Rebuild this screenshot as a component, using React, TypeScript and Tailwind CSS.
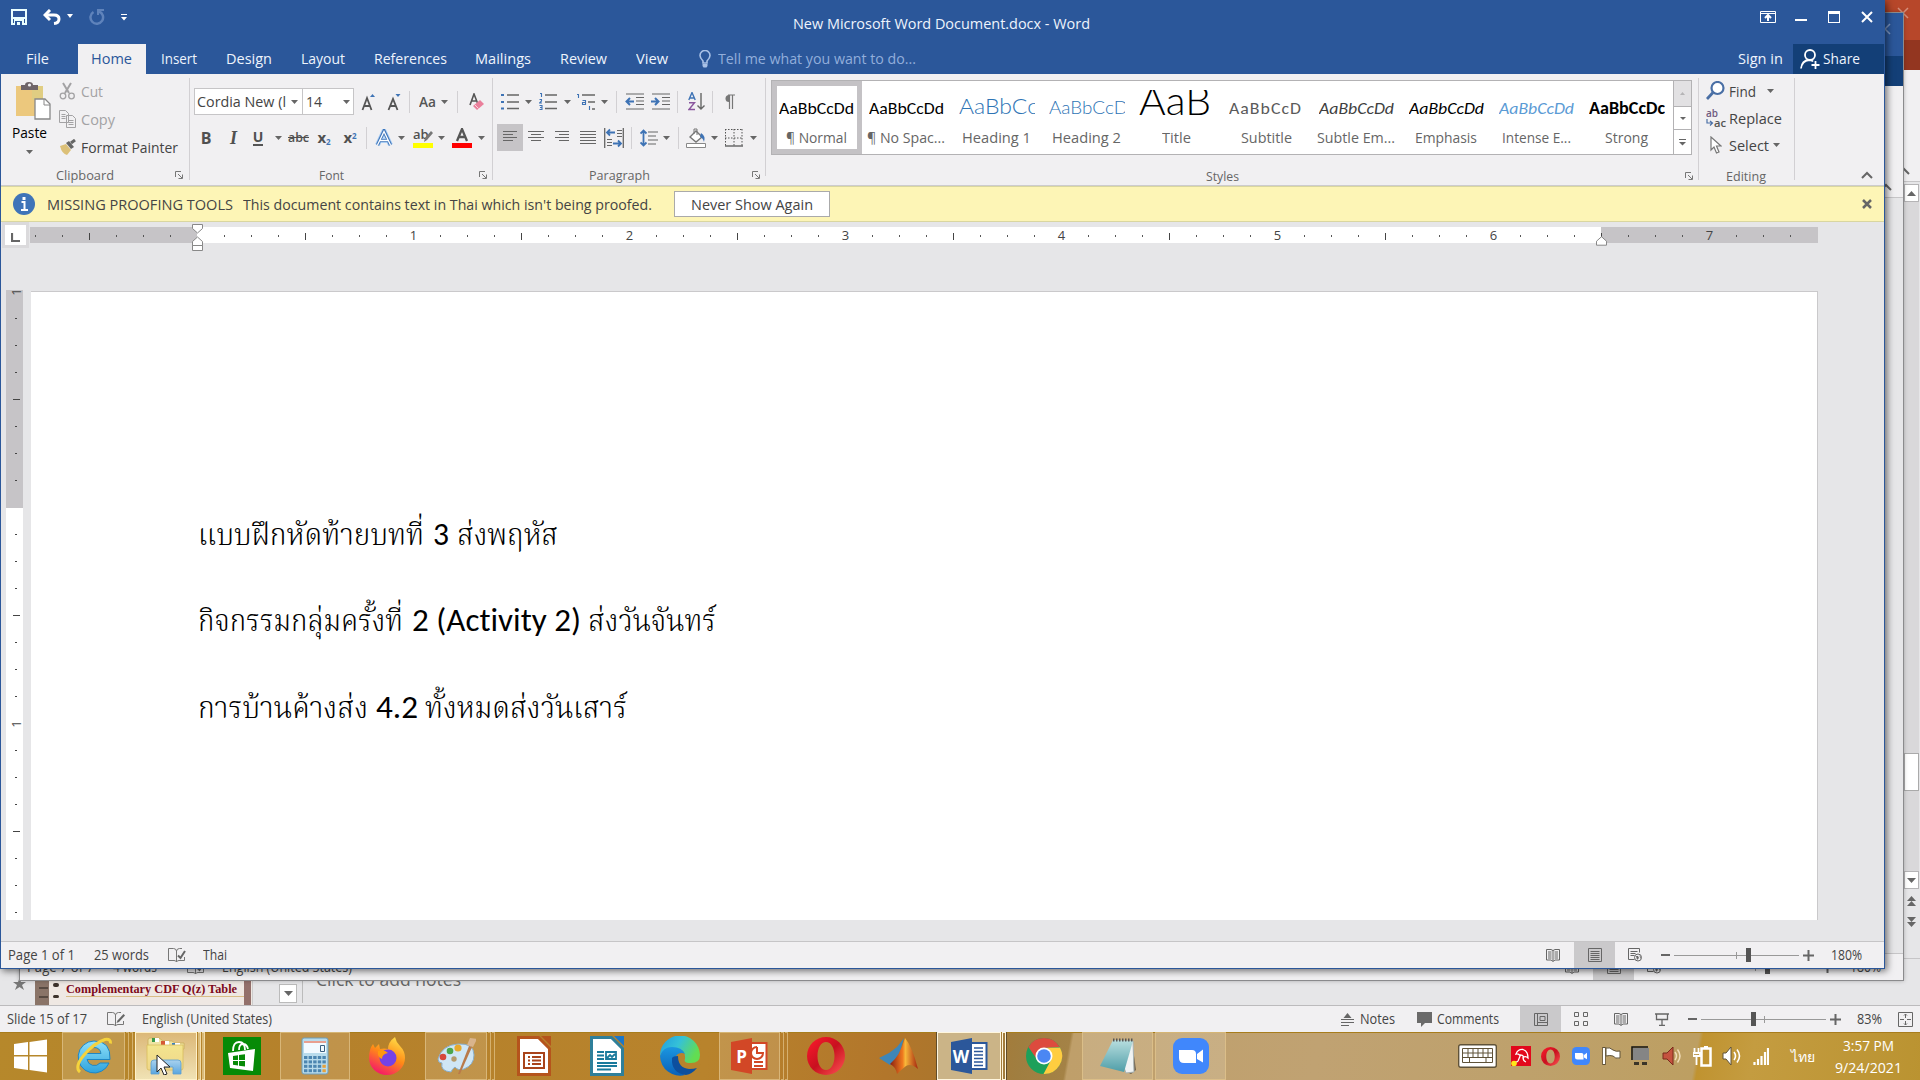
import React, { useLayoutEffect, useRef, useState } from "react";

type P = { className?: string; children?: React.ReactNode };

/* Text condensed or widened to the width of its box. */
function Fit({ className = "", children }: P) {
  const outer = useRef<HTMLSpanElement>(null);
  const inner = useRef<HTMLSpanElement>(null);
  const [scale, setScale] = useState(1);
  useLayoutEffect(() => {
    if (outer.current && inner.current && inner.current.offsetWidth > 0) {
      setScale(outer.current.offsetWidth / inner.current.getBoundingClientRect().width);
    }
  }, []);
  return (
    <span ref={outer} className={`block shrink-0 whitespace-nowrap ${className}`}>
      <span ref={inner} className="inline-block origin-left" style={{ transform: `scaleX(${scale})` }}>
        {children}
      </span>
    </span>
  );
}

function Svg({ w, h, className = "", children }: P & { w: number; h: number }) {
  return (
    <svg width={w} height={h} viewBox={`0 0 ${w} ${h}`} fill="none" className={`block shrink-0 ${className}`}>
      {children}
    </svg>
  );
}

const Caret = ({ className = "" }: P) => (
  <Svg w={7} h={4} className={className}>
    <path d="M0 0h7L3.500 4z" fill="#666" />
  </Svg>
);
const Cell = ({ className = "", children }: P) => (
  <div className={`flex shrink-0 items-center justify-center ${className}`}>{children}</div>
);
const VLine = ({ className = "" }: P) => <div className={`w-px shrink-0 bg-[#d2d0d3] ${className}`} />;
const Launcher = ({ className = "" }: P) => (
  <Svg w={8} h={8} className={className}>
    <path d="M.5 6V.5H6M3 3l4 4M7.500 3.500v4h-4" stroke="#777" />
  </Svg>
);
const Cross = ({ c = "#fff", s = 12, sw = 2 }: { c?: string; s?: number; sw?: number }) => (
  <Svg w={s} h={s}>
    <path d={`M1 1L${s - 1} ${s - 1}M${s - 1} 1L1 ${s - 1}`} stroke={c} strokeWidth={sw} />
  </Svg>
);
const ChevronUp = () => (
  <Svg w={12} h={8}>
    <path d="M1 7l5-5 5 5" stroke="#666" strokeWidth="2" />
  </Svg>
);

/* ---------- shared status-bar pieces ---------- */

const ProofIcon = ({ edit }: { edit?: boolean }) => (
  <Svg w={18} h={15}>
    <path d="M8.500 14V3Q8 .500 5.500.500H.500v12H6q2 0 2.500 1.500Q9 12.500 11 12.500h5.500V9" stroke="#777" />
    <path d="M8.500 3Q9 .500 11.500.500H14" stroke="#777" />
    {edit ? <path d="M9.500 11l1-2.500 6-6.500 1.500 1.500-6 6.500z" fill="#666" /> : <path d="M10 7.500l2.500 2.500 4.500-7" stroke="#666" strokeWidth="2" />}
  </Svg>
);
const BookIcon = () => (
  <Svg w={14} h={14}>
    <path d="M.5 1.500h4.500l2 1 2-1h4.500V12H9l-2 1.500L5 12H.500zM7 2v11" stroke="#666" />
    <path d="M2 4h3.500M2 6h3.500M2 8h3.500M2 10h3.500M8.500 4H12M8.500 6H12M8.500 8H12M8.500 10H12" stroke="#666" />
  </Svg>
);
const PrintLayoutIcon = () => (
  <Svg w={14} h={14}>
    <path d="M.5.500h13v13H.500z" stroke="#666" />
    <path d="M2.500 3.500h9M2.500 5.500h9M2.500 7.500h9M2.500 9.500h9M2.500 11.500h9" stroke="#666" />
  </Svg>
);
const WebIcon = () => (
  <Svg w={15} h={14}>
    <path d="M6.500 11.500H.500V.500h11v4M2.500 3.500h7M2.500 5.500h5M2.500 7.500h4" stroke="#666" />
    <circle cx="10" cy="9.500" r="3.500" stroke="#666" />
    <path d="M8 8l2 0 1 2-2 2zM11 7l2 2v2z" fill="#666" />
  </Svg>
);
const Minus = () => <div className="h-[2px] w-[9px] shrink-0 bg-[#666]" />;
const Plus = () => (
  <Svg w={11} h={11}>
    <path d="M5.500 0v11M0 5.500h11" stroke="#666" strokeWidth="2" />
  </Svg>
);

function WordStatus({ page, words, wordsWidth, lang }: { page: string; words: string; wordsWidth: string; lang: React.ReactNode }) {
  return (
    <div className="flex h-[27px] shrink-0 items-center border-t border-[#c6c5c7] bg-[#f1f0f2] text-[14px] leading-[18px] text-[#444] [&_span]:-mt-px">
      <Fit className="ml-[7px] w-[67px]">{page}</Fit>
      <div className="ml-[19px] w-[55px]"><Fit className={wordsWidth}>{words}</Fit></div>
      <div className="ml-[19px]"><ProofIcon /></div>
      <div className="ml-[17px]">{lang}</div>
      <div className="ml-auto"><BookIcon /></div>
      <Cell className="ml-[14px] h-full w-[41px] bg-[#cac9cb]"><PrintLayoutIcon /></Cell>
      <div className="ml-[13px]"><WebIcon /></div>
      <div className="ml-[18px]"><Minus /></div>
      <div className="ml-[4px] flex h-4 w-[125px] items-center">
        <div className="h-px w-[62px] bg-[#999]" />
        <div className="h-[7px] w-px bg-[#999]" />
        <div className="h-px w-[9px] bg-[#999]" />
        <div className="h-[14px] w-[5px] bg-[#555]" />
        <div className="h-px w-[48px] bg-[#999]" />
      </div>
      <div className="ml-[4px]"><Plus /></div>
      <Fit className="ml-[17px] mr-[22px] w-[31px]">180%</Fit>
    </div>
  );
}

/* ---------- PowerPoint window ---------- */

const UpTri = () => (
  <Svg w={9} h={5}><path d="M0 5L4.500 0 9 5z" fill="#666" /></Svg>
);
const DownTri = () => (
  <Svg w={9} h={5}><path d="M0 0h9L4.500 5z" fill="#666" /></Svg>
);

function PowerPoint() {
  return (
    <div className="absolute inset-0 flex flex-col bg-[#e6e6e8]">
      <div className="flex h-[40px] shrink-0 justify-end bg-[#b7472a] pr-[11px] pt-[7px]">
        <Cross c="#d68f7c" sw={1.5} />
      </div>
      <div className="h-[30px] shrink-0 bg-[#933620]" />
      <div className="flex h-[112px] shrink-0 items-end justify-end border-b border-[#c6c5c7] bg-[#f1f0f2] pb-[6px] pr-[10px]">
        <ChevronUp />
      </div>
      <div className="flex h-[776px] shrink-0 justify-end">
        <div className="flex w-[17px] flex-col items-center">
          <Cell className="mt-[2px] h-[18px] w-[15px] border border-[#b5b4b6] bg-white"><UpTri /></Cell>
          <div className="h-[551px] w-[15px] shrink-0 bg-[#d9d8da]" />
          <div className="h-[38px] w-[15px] shrink-0 border border-[#aaa] bg-white" />
          <div className="h-[80px] w-[15px] shrink-0 bg-[#d9d8da]" />
          <Cell className="h-[18px] w-[15px] border border-[#b5b4b6] bg-white"><DownTri /></Cell>
          <div className="mt-[7px]"><UpTri /><UpTri /></div>
          <div className="mt-[11px]"><DownTri /><DownTri /></div>
        </div>
      </div>
      <div className="flex h-[47px] shrink-0 items-end border-t border-[#c6c5c7]">
        <div className="ml-[13px] flex h-[27px] w-[22px] items-start">
          <Svg w={13} h={12}><path d="M6.500 0l1.500 4 5 0-4 3 2 5-4.500-3L2 12l2-5-4-3h5z" fill="#777" /></Svg>
        </div>
        <div className="flex h-[27px] w-[218px] border-r border-[#ccc] bg-[#efe8e3]">
          <div className="w-[14px] shrink-0 bg-[#8a7468]">
            <div className="ml-1 mt-[9px] h-[2px] w-[9px] bg-[#584a42]" />
            <div className="ml-1 mt-[7px] h-[2px] w-[9px] bg-[#584a42]" />
          </div>
          <div className="ml-[4px] flex w-[6px] shrink-0 flex-col gap-[8px] pt-[5px]">
            <div className="h-[4px] rounded-full bg-[#3c322c]" />
            <div className="h-[3px] rounded-full bg-[#3c322c]" />
          </div>
          <div className="ml-[2px] w-[180px] shrink-0 pl-[5px] font-['Liberation_Serif',serif]">
            <div className="h-[19px] w-[178px] border-b border-[#d9bd86] pt-[3px] text-[13.500px] font-bold leading-[16px] text-[#7d0a1c]">
              <Fit className="w-[171px]">Complementary CDF Q(z) Table</Fit>
            </div>
          </div>
          <div className="ml-[3px] w-[7px] shrink-0 bg-[#93706b]" />
        </div>
        <div className="mb-[2px] ml-[26px] flex h-[19px] w-[18px] items-center justify-center border border-[#bbb] bg-white"><DownTri /></div>
        <div className="mb-[2px] ml-[5px] h-[22px] w-px bg-[#bbb]" />
        <div className="ml-[13px] h-[36px] text-[18px] leading-[20px] text-[#666]"><Fit className="w-[145px]">Click to add notes</Fit></div>
      </div>
      <div className="flex h-[27px] shrink-0 items-center border-t border-[#bcbbbd] bg-[#f1f0f2] text-[14px] leading-[18px] text-[#444] [&_span]:-mt-px">
        <Fit className="ml-[7px] w-[80px]">Slide 15 of 17</Fit>
        <div className="ml-[20px]"><ProofIcon edit /></div>
        <Fit className="ml-[17px] w-[130px]">English (United States)</Fit>
        <div className="ml-auto">
          <Svg w={13} h={13}><path d="M6.500 0l4 5h-8z" fill="#666" /><path d="M0 6.500h13M0 9.500h13M0 12.500h8" stroke="#666" /></Svg>
        </div>
        <Fit className="ml-[6px] w-[35px]">Notes</Fit>
        <div className="ml-[22px]">
          <Svg w={15} h={15}><path d="M0 0h15v11H8l-4 4v-4H0z" fill="#6a6a6a" /></Svg>
        </div>
        <Fit className="ml-[5px] w-[62px]">Comments</Fit>
        <Cell className="ml-[21px] h-full w-[41px] bg-[#cac9cb]">
          <Svg w={14} h={13}><path d="M.5.500h13v12H.500zM3.500.500v12M6 3.500h5v4H6zM3.500 9.500h10" stroke="#666" /></Svg>
        </Cell>
        <div className="ml-[13px]">
          <Svg w={14} h={14}><path d="M.5.500h4v4h-4zM9.500.500h4v4h-4zM.5 9.500h4v4h-4zM9.500 9.500h4v4h-4z" stroke="#666" /></Svg>
        </div>
        <div className="ml-[26px]"><BookIcon /></div>
        <div className="ml-[27px]">
          <Svg w={14} h={13}><path d="M0 1h14M1.500 1v5.500h11V1M7 7v5M4 12.500h6" stroke="#666" strokeWidth="1.300" /></Svg>
        </div>
        <div className="ml-[19px]"><Minus /></div>
        <div className="ml-[4px] flex h-4 w-[125px] items-center">
          <div className="h-px w-[50px] bg-[#999]" />
          <div className="h-[14px] w-[5px] bg-[#555]" />
          <div className="h-px w-[8px] bg-[#999]" />
          <div className="h-[7px] w-px bg-[#999]" />
          <div className="h-px w-[61px] bg-[#999]" />
        </div>
        <div className="ml-[4px]"><Plus /></div>
        <Fit className="ml-[16px] w-[25px]">83%</Fit>
        <div className="ml-[16px] mr-[7px]">
          <Svg w={15} h={15}><path d="M.5.500h14v14H.500zM7.500 2v4M7.500 9v4M2 7.500h4M9 7.500h4M6 3.500L7.500 2 9 3.500M6 11.500L7.500 13 9 11.500" stroke="#666" /></Svg>
        </div>
      </div>
    </div>
  );
}

/* ---------- Word window underneath ---------- */

function BackWord() {
  return (
    <div className="absolute left-[19px] top-[12px] flex h-[969px] w-[1885px] flex-col border border-[#8b8b8d] bg-[#e6e6e8] shadow-[0_0_4px_rgba(0,0,0,0.25)]">
      <div className="flex h-[43px] shrink-0 justify-end bg-[#2b579a] pr-[12px] pt-[10px]"><Cross c="#7d97c3" sw={1.5} /></div>
      <div className="flex h-[30px] shrink-0 justify-end bg-[#2b579a]"><div className="w-[91px] bg-[#133f77]" /></div>
      <div className="flex h-[112px] shrink-0 items-end justify-end border-b border-[#c6c5c7] bg-[#f1f0f2] pb-[6px] pr-[11px]"><ChevronUp /></div>
      <div className="grow" />
      <WordStatus page="Page 7 of 7" words="4 words" wordsWidth="w-[44px]" lang={<Fit className="w-[130px]">English (United States)</Fit>} />
    </div>
  );
}

/* ---------- main Word window ---------- */

function TitleArea() {
  return (
    <div className="h-[74px] shrink-0 bg-[#2b579a] text-[15px] text-[#eef4fd]">
      <div className="flex h-[44px] items-start">
        <div className="ml-[10px] mt-[9px]">
          <Svg w={16} h={16}><path d="M1 1h14v14H1zM1 9h14" stroke="#eaffff" strokeWidth="2" /><path d="M3 10h10v5H3z" fill="#eaffff" /><path d="M4 12h7v4H4z" fill="#2b579a" /><path d="M6 13h3v3H6z" fill="#eaffff" /></Svg>
        </div>
        <div className="ml-[16px] mt-[9px]">
          <Svg w={18} h={16}><path d="M2 6h9q5 0 5 4t-5 4.500" stroke="#fff" strokeWidth="3" /><path d="M7 1L2 6l5 5" stroke="#fff" strokeWidth="3" /></Svg>
        </div>
        <div className="ml-[6px] mt-[14px]"><Svg w={6} h={4}><path d="M0 0h6L3 4z" fill="#fff" /></Svg></div>
        <div className="ml-[15px] mt-[8px]">
          <Svg w={17} h={17}><path d="M11 3.500a6.300 6.300 0 1 1-5.500.5" stroke="#5f83bb" strokeWidth="2.500" /><path d="M9 2h7M10 1v6" stroke="#5f83bb" strokeWidth="2" /></Svg>
        </div>
        <div className="ml-[16px] mt-[14px]"><Svg w={6} h={7}><path d="M0 .5h6" stroke="#fff" /><path d="M0 3h6L3 6.500z" fill="#fff" /></Svg></div>
        <Fit className="ml-[666px] mt-[12px] w-[297px] leading-[22px]">New Microsoft Word Document.docx - Word</Fit>
        <div className="ml-auto mt-[11px]"><Svg w={16} h={12}><path d="M.5.500h15v11H.500zM.5 2.500h15" stroke="#fff" /><path d="M8 10V4M5 7l3-3 3 3" stroke="#fff" strokeWidth="2" /></Svg></div>
        <div className="ml-[19px] mt-[19px] h-[2px] w-[12px] bg-white" />
        <div className="ml-[21px] mt-[11px] h-[12px] w-[12px] border border-t-[3px] border-white" />
        <div className="ml-[21px] mr-[11px] mt-[11px]"><Cross /></div>
      </div>
      <div className="flex h-[30px] items-center [&_span]:-mt-px">
        <Fit className="ml-[25px] w-[23px]">File</Fit>
        <div className="ml-[29px] flex h-full w-[68px] items-center bg-[#f1f0f2] pl-[13px] text-[#2b579a]"><Fit className="w-[41px]">Home</Fit></div>
        <Fit className="ml-[15px] w-[36px]">Insert</Fit>
        <Fit className="ml-[29px] w-[46px]">Design</Fit>
        <Fit className="ml-[29px] w-[44px]">Layout</Fit>
        <Fit className="ml-[29px] w-[73px]">References</Fit>
        <Fit className="ml-[28px] w-[56px]">Mailings</Fit>
        <Fit className="ml-[29px] w-[47px]">Review</Fit>
        <Fit className="ml-[29px] w-[32px]">View</Fit>
        <div className="ml-[31px]">
          <Svg w={12} h={18}><path d="M4 13V11Q1 8 1 5.500A5 5 0 0 1 11 5.500Q11 8 8 11v2z" stroke="#a9c1e6" strokeWidth="1.600" /><path d="M3.500 14h5v2l-1 1.500h-3l-1-1.500z" fill="#a9c1e6" /></Svg>
        </div>
        <Fit className="ml-[7px] w-[198px] text-[#92aedb]">Tell me what you want to do...</Fit>
        <Fit className="ml-auto mr-[10px] w-[45px]">Sign in</Fit>
        <div className="flex h-full w-[91px] items-center bg-[#133f77] pl-[7px]">
          <Svg w={20} h={20}><circle cx="10" cy="6" r="5" stroke="#fff" strokeWidth="1.800" /><path d="M1 19.500q1-8 8-8.500 3 0 4 1.500M15.500 12v8M11.500 16h8" stroke="#fff" strokeWidth="1.800" /></Svg>
          <Fit className="ml-[3px] w-[37px]">Share</Fit>
        </div>
      </div>
    </div>
  );
}

const GroupLabel = ({ className = "", children }: P) => (
  <div className={`flex h-[20px] items-center pt-[1px] text-[13.500px] leading-[18px] text-[#666] ${className}`}>{children}</div>
);

function ClipboardGroup() {
  return (
    <div className="flex w-[188px] shrink-0 flex-col pt-[3px]">
      <div className="flex h-[87px]">
        <div className="flex w-[50px] flex-col pl-[11px]">
          <Svg w={36} h={40} className="ml-[3px] mt-[4px]">
            <path d="M1 5h27v30H1z" fill="#ecc87d" /><path d="M17 5h11v14H17z" fill="#dccf84" opacity=".7" />
            <path d="M6 9V4h4q0-3 4-3t4 3h5v5z" fill="#6e6468" /><circle cx="14.500" cy="4" r="1.600" fill="#f1f0f2" />
            <path d="M20 18h10l5 5v15H20z" fill="#fff" stroke="#888" strokeWidth="1.300" /><path d="M29 18v6h6" stroke="#888" />
          </Svg>
          <Fit className="w-[35px] text-[15px] leading-[22px]">Paste</Fit>
          <Caret className="ml-[14px] mt-[7px]" />
        </div>
        <div className="flex flex-col pl-[7px] text-[15px] leading-[28px]">
          <div className="flex h-[28px] items-center text-[#a3a2a4]">
            <Svg w={17} h={18} className="ml-px"><path d="M4 1l6 10M12 1L6 11" stroke="#a3a2a4" strokeWidth="2" /><circle cx="4" cy="14" r="2.800" stroke="#a3a2a4" strokeWidth="1.300" /><circle cx="12.500" cy="14" r="2.800" stroke="#a3a2a4" strokeWidth="1.300" /></Svg>
            <Fit className="ml-[5px] w-[22px]">Cut</Fit>
          </div>
          <div className="flex h-[28px] items-center text-[#a3a2a4]">
            <Svg w={18} h={18} className="ml-px"><path d="M.5.500h6l3 3v9h-9zM7.500 5.500h6l3 3v9h-9z" stroke="#a3a2a4" fill="#f1f0f2" /><path d="M2.500 4.500h4M2.500 6.500h4M2.500 8.500h4M9.500 10.500h5M9.500 12.500h5M9.500 14.500h5" stroke="#a3a2a4" /></Svg>
            <Fit className="ml-[4px] w-[34px]">Copy</Fit>
          </div>
          <div className="flex h-[28px] items-center text-[#444]">
            <Svg w={17} h={16} className="ml-px"><path d="M1 7l6-2 5 6-4 5q-5-1-7-9z" fill="#dcc078" /><path d="M7 4l3-2 5 6-3 2z" fill="#666" /><path d="M12 4l4-3" stroke="#666" strokeWidth="3" /></Svg>
            <Fit className="ml-[5px] w-[97px]">Format Painter</Fit>
          </div>
        </div>
      </div>
      <GroupLabel><Fit className="ml-[55px] w-[58px]">Clipboard</Fit><Launcher className="ml-[61px]" /></GroupLabel>
    </div>
  );
}

const Glyph = ({ className = "", children }: P) => <span className={`font-bold leading-none text-[#505050] ${className}`}>{children}</span>;

function FontGroup() {
  return (
    <div className="flex w-[302px] shrink-0 flex-col">
      <div className="mt-[14px] flex h-[27px] items-center text-[15px] text-[#444]">
        <div className="ml-[4px] flex h-[27px] w-[109px] items-center overflow-hidden border border-[#c6c5c7] bg-white pl-[2px]">
          <Fit className="w-[89px]">Cordia New (l</Fit><Caret className="ml-[5px]" />
        </div>
        <div className="-ml-px flex h-[27px] w-[52px] items-center border border-[#c6c5c7] bg-white pl-[3px]">
          <Fit className="w-[16px]">14</Fit><Caret className="ml-[21px]" />
        </div>
        <Cell className="w-[28px]">
          <Svg w={14} h={18}><path d="M1.500 17L6 5l4.500 12M3 13h6" stroke="#555" strokeWidth="1.800" /><path d="M9 4l2.500-3L14 4z" fill="#3e73b5" /></Svg>
        </Cell>
        <Cell className="w-[23px]">
          <Svg w={14} h={18}><path d="M1.500 17L6 6l4.500 11M3 13h6" stroke="#555" strokeWidth="1.800" /><path d="M8.500 1h5L11 4z" fill="#3e73b5" /></Svg>
        </Cell>
        <VLine className="ml-[4px] h-[22px]" />
        <Fit className="ml-[9px] w-[17px] font-semibold text-[#555]">Aa</Fit>
        <Caret className="ml-[5px]" />
        <VLine className="ml-[9px] h-[22px]" />
        <Svg w={16} h={18} className="ml-[11px]"><path d="M1 12L5 1l3.500 9M2 8h5" stroke="#555" strokeWidth="1.600" /><path d="M4 13l7-6 4 4-7 6z" fill="#ea7f9b" /><path d="M5.500 11.500l4 4" stroke="#fbd5de" /></Svg>
      </div>
      <div className="mt-[9px] flex h-[27px] items-center text-[#505050]">
        <Cell className="ml-[5px] w-[22px]"><Glyph className="text-[16px]">B</Glyph></Cell>
        <Cell className="w-[33px]"><Glyph className="font-['Liberation_Serif',serif] text-[18px] italic">I</Glyph></Cell>
        <Cell className="w-[16px]"><Glyph className="border-b-2 border-[#555] text-[14px]">U</Glyph></Cell>
        <Caret className="ml-[9px]" />
        <Fit className="ml-[6px] w-[21px] text-[13px] font-semibold"><span className="line-through">abc</span></Fit>
        <Cell className="ml-[5px] w-[20px]"><Glyph className="text-[15px]">x<sub className="text-[8px] text-[#3e73b5]">2</sub></Glyph></Cell>
        <Cell className="ml-[6px] w-[20px]"><Glyph className="text-[15px]">x<sup className="text-[8px] text-[#3e73b5]">2</sup></Glyph></Cell>
        <VLine className="ml-[6px] h-[22px]" />
        <Svg w={18} h={18} className="ml-[8px]"><path d="M2.500 16L9 2l6.500 14M5 11.500h8" stroke="#a9cdf3" strokeWidth="5" /><path d="M2.500 16L9 2l6.500 14M5 11.500h8" stroke="#3f74b8" strokeWidth="3.200" /><path d="M2.500 16L9 2.500l6.500 13.500M5 11.500h8" stroke="#fff" strokeWidth="1.300" /></Svg>
        <Caret className="ml-[5px]" />
        <div className="ml-[8px] w-[20px]">
          <div className="flex h-[15px]"><Glyph className="text-[13px] font-semibold">ab</Glyph><Svg w={11} h={15} className="-ml-[6px]"><path d="M1 14l1-4 6-7 2 2-6 7z" fill="#777" /></Svg></div>
          <div className="h-[5px] bg-[#ff0]" />
        </div>
        <Caret className="ml-[5px]" />
        <div className="ml-[7px] w-[20px]">
          <div className="flex h-[15px] justify-center"><Svg w={14} h={14}><path d="M2 13L7 1l5 12M4 9h6" stroke="#555" strokeWidth="2.300" /></Svg></div>
          <div className="h-[5px] bg-[#f00]" />
        </div>
        <Caret className="ml-[6px]" />
      </div>
      <div className="h-[13px]" />
      <GroupLabel><Fit className="ml-[129px] w-[25px]">Font</Fit><Launcher className="ml-[135px]" /></GroupLabel>
    </div>
  );
}

function Lines({ rows, w = 16 }: { rows: [number, number][]; w?: number }) {
  return (
    <Svg w={w} h={14}>
      {rows.map(([a, b], i) => (
        <path key={i} d={`M${a} ${i * 3 + 0.5}H${b}`} stroke="#666" />
      ))}
    </Svg>
  );
}

function ParagraphGroup() {
  return (
    <div className="flex w-[272px] shrink-0 flex-col">
      <div className="mt-[14px] flex h-[27px] items-center">
        <Svg w={19} h={17} className="ml-[8px]"><path d="M0 1h3v2H0zM0 8h3v2H0zM0 14.500h3v2H0z" fill="#3e73b5" /><path d="M6 2h12M6 9h12M6 15.500h12" stroke="#666" strokeWidth="1.300" /></Svg>
        <Caret className="ml-[5px]" />
        <Svg w={19} h={19} className="ml-[7px]"><path d="M1 1.500h1.500V5M.5 7.500h2v1.500l-2 2h2.500M.5 13.500h2.500v4H.500M1 15.500h2" stroke="#3e73b5" strokeWidth="1.100" /><path d="M6 3h12M6 10h12M6 16.500h12" stroke="#666" strokeWidth="1.300" /></Svg>
        <Caret className="ml-[6px]" />
        <Svg w={20} h={18} className="ml-[5px]"><path d="M1 1.500h1.500V5M6.500 7.500h3v4h-3v-2h3M13.500 13v4" stroke="#3e73b5" strokeWidth="1.100" /><path d="M6 2h13M12 9h7M16 16h3" stroke="#666" strokeWidth="1.300" /></Svg>
        <Caret className="ml-[5px]" />
        <VLine className="ml-[8px] h-[22px]" />
        <Svg w={19} h={17} className="ml-[8px]"><path d="M1 1h18M11 4.500h8M11 8h8M11 11.500h8M1 16h18" stroke="#666" strokeWidth="1.200" /><path d="M9 8.500H2M5 5L1.500 8.500 5 12" stroke="#3e73b5" strokeWidth="2" /></Svg>
        <Svg w={19} h={17} className="ml-[7px]"><path d="M1 1h18M11 4.500h8M11 8h8M11 11.500h8M1 16h18" stroke="#666" strokeWidth="1.200" /><path d="M0 8.500h7M4 5l3.500 3.500L4 12" stroke="#3e73b5" strokeWidth="2" /></Svg>
        <VLine className="ml-[7px] h-[22px]" />
        <Svg w={18} h={19} className="ml-[10px]"><path d="M.8 8L4 .500 7.200 8M2 6h4" stroke="#3e73b5" strokeWidth="1.400" /><path d="M1 10.800h5.500L1 17.500h6" stroke="#8a569e" strokeWidth="1.400" /><path d="M13 1v16M9.500 13.500L13 17l3.500-3.500" stroke="#666" strokeWidth="1.400" /></Svg>
        <VLine className="ml-[6px] h-[22px]" />
        <Svg w={13} h={16} className="ml-[10px]"><path d="M6 1a3.500 3.500 0 0 0 0 7z" fill="#777" /><path d="M5 1h7M6.500 1v14M9.500 1v14" stroke="#777" strokeWidth="1.200" /></Svg>
      </div>
      <div className="mt-[9px] flex h-[27px] items-center">
        <Cell className="ml-[4px] h-full w-[26px] bg-[#c6c4c7]"><Lines rows={[[1, 15], [1, 11], [1, 15], [1, 11]]} /></Cell>
        <Cell className="w-[26px]"><Lines rows={[[0, 16], [3, 13], [0, 16], [3, 13]]} /></Cell>
        <Cell className="w-[26px]"><Lines rows={[[1, 15], [5, 15], [1, 15], [5, 15]]} /></Cell>
        <Cell className="w-[25px]"><Lines rows={[[0, 16], [0, 16], [0, 16], [0, 16], [0, 16]]} /></Cell>
        <Svg w={20} h={20} className="ml-[4px]"><path d="M.7 0v20M19.300 0v20" stroke="#666" strokeWidth="1.300" /><path d="M13 2.500h5M13 5.500h5M13 8.500h5M3 11.500h5M3 14.500h5M3 17.500h5" stroke="#666" /><path d="M11 4.500H3M6 1.500l-3 3 3 3M9 15.500h8M14 12.500l3 3-3 3" stroke="#3e73b5" strokeWidth="1.800" /></Svg>
        <VLine className="ml-[7px] h-[22px]" />
        <Svg w={18} h={18} className="ml-[8px]"><path d="M8 3h10M8 7h8M8 11h10M8 15h8" stroke="#666" strokeWidth="1.200" /><path d="M3.500 1v16M.5 4.500l3-3 3 3M.5 13.500l3 3 3-3" stroke="#3e73b5" strokeWidth="1.800" /></Svg>
        <Caret className="ml-[5px]" />
        <VLine className="ml-[8px] h-[22px]" />
        <Svg w={21} h={20} className="ml-[7px]"><path d="M4 9l6-6 6 6-6 5z" stroke="#777" strokeWidth="1.400" fill="#fff" /><path d="M8 6V1h3v6" stroke="#777" /><path d="M15 5q5 3 3 9-1-4-4-5z" fill="#3e73b5" /><path d="M.5 15.500h19v4H.500z" fill="#fff" stroke="#888" /></Svg>
        <Caret className="ml-[4px]" />
        <Svg w={18} h={18} className="ml-[7px]"><path d="M.5 0v17M9 0v17M17 0v17M0 .500h18M0 9h18" stroke="#555" strokeDasharray="1.500 1.500" /><path d="M0 17h18" stroke="#555" strokeWidth="1.300" /></Svg>
        <Caret className="ml-[7px]" />
      </div>
      <div className="h-[13px]" />
      <GroupLabel><Fit className="ml-[96px] w-[61px]">Paragraph</Fit><Launcher className="ml-[102px]" /></GroupLabel>
    </div>
  );
}

const styleItems = [
  { label: "¶ Normal", lw: "w-[61px]", sample: "AaBbCcDd", cls: "w-[75px] text-[17px] text-black" },
  { label: "¶ No Spac...", lw: "w-[78px]", sample: "AaBbCcDd", cls: "w-[75px] text-[17px] text-black" },
  { label: "Heading 1", lw: "w-[69px]", sample: "AaBbCc", cls: "w-[79px] font-['Lato',sans-serif] text-[22px] font-light text-[#2e74b5]" },
  { label: "Heading 2", lw: "w-[69px]", sample: "AaBbCcD", cls: "w-[79px] font-['Lato',sans-serif] text-[18px] font-light text-[#2e74b5]" },
  { label: "Title", lw: "w-[29px]", sample: "AaB", cls: "w-[72px] font-['Lato',sans-serif] text-[39px] font-light text-black" },
  { label: "Subtitle", lw: "w-[51px]", sample: "AaBbCcD", cls: "w-[73px] text-[17px] tracking-[1px] text-[#5a5a5a]" },
  { label: "Subtle Em...", lw: "w-[78px]", sample: "AaBbCcDd", cls: "w-[75px] text-[17px] italic text-[#404040]" },
  { label: "Emphasis", lw: "w-[62px]", sample: "AaBbCcDd", cls: "w-[75px] text-[17px] italic text-black" },
  { label: "Intense E...", lw: "w-[69px]", sample: "AaBbCcDd", cls: "w-[75px] text-[17px] italic text-[#5b9bd5]" },
  { label: "Strong", lw: "w-[43px]", sample: "AaBbCcDc", cls: "w-[76px] text-[17px] font-bold text-black" },
];

function StylesGroup() {
  return (
    <div className="flex w-[932px] shrink-0 flex-col pl-[5px]">
      <div className="mt-[6px] flex h-[75px] w-[921px] border border-[#b3b2b4] bg-white">
        {styleItems.map((s, i) => (
          <div key={s.label} className={i === 0 ? "flex w-[90px] shrink-0 flex-col items-center border-[5px] border-[#c4c2c5] pt-[4px]" : "flex w-[90px] shrink-0 flex-col items-center pt-[9px]"}>
            <div className="flex h-[31px] w-[76px] shrink-0 items-baseline justify-start overflow-hidden font-['Carlito','Lato',sans-serif] leading-[20px]">
              <span className="inline-block h-[24px] w-0" />
              <Fit className={`${s.cls} leading-[20px]`}>{s.sample}</Fit>
            </div>
            <div className="mt-[6px] pr-[2px] text-[15px] leading-[20px] text-[#666]"><Fit className={s.lw}>{s.label}</Fit></div>
          </div>
        ))}
        <div className="ml-auto flex w-[18px] flex-col border-l border-[#b3b2b4]">
          <Cell className="h-[26px] border-b border-[#b3b2b4] bg-[#e2e1e3]"><Svg w={5} h={3}><path d="M0 3L2.500 0 5 3z" fill="#b5b4b6" /></Svg></Cell>
          <Cell className="h-[23px] border-b border-[#b3b2b4]"><Svg w={6} h={3}><path d="M0 0h6L3 3z" fill="#666" /></Svg></Cell>
          <Cell className="h-[24px]"><Svg w={7} h={7}><path d="M0 .5h7" stroke="#666" /><path d="M0 3h7L3.500 6.500z" fill="#666" /></Svg></Cell>
        </div>
      </div>
      <div className="h-[10px]" />
      <GroupLabel><Fit className="ml-[435px] w-[33px]">Styles</Fit><Launcher className="ml-[446px]" /></GroupLabel>
    </div>
  );
}

function EditingGroup() {
  return (
    <div className="flex w-[95px] shrink-0 flex-col pl-[7px] text-[15px] leading-[20px] text-[#444]">
      <div className="mt-[3px] flex h-[27px] items-center"><Svg w={19} h={19}><circle cx="11.500" cy="7" r="6" stroke="#4a6fa5" strokeWidth="2.200" fill="#fff" /><path d="M7 11.500L1 18" stroke="#4a6fa5" strokeWidth="2.800" /></Svg><Fit className="ml-[4px] w-[27px]">Find</Fit><Caret className="ml-[11px]" /></div>
      <div className="flex h-[27px] items-center">
        <div className="flex w-[21px] shrink-0 flex-col text-[11px] font-semibold leading-[10px] text-[#555]">
          <Fit className="w-[12px] text-[#6e5a80]">ab</Fit>
          <div className="flex items-center"><Svg w={8} h={8}><path d="M1 0v4h5M4 2l2.500 2L4 6.500" stroke="#4a6fa5" strokeWidth="1.200" /></Svg><Fit className="w-[12px]">ac</Fit></div>
        </div>
        <Fit className="ml-[2px] w-[53px]">Replace</Fit>
      </div>
      <div className="flex h-[27px] items-center"><Svg w={12} h={18} className="ml-[4px]"><path d="M1 1v13l3-3 2.500 6 2.500-1-2.500-6H11z" fill="#fff" stroke="#777" strokeWidth="1.200" /></Svg><Fit className="ml-[7px] w-[40px]">Select</Fit><Caret className="ml-[4px]" /></div>
      <GroupLabel className="mt-[7px]"><Fit className="ml-[20px] w-[40px]">Editing</Fit></GroupLabel>
    </div>
  );
}

function Ribbon() {
  return (
    <div className="flex h-[112px] shrink-0 border-b border-[#cdccce] bg-[#f1f0f2]">
      <ClipboardGroup />
      <VLine className="mt-[4px] h-[102px]" />
      <FontGroup />
      <VLine className="mt-[4px] h-[102px]" />
      <ParagraphGroup />
      <VLine className="mt-[4px] h-[98px]" />
      <StylesGroup />
      <VLine className="mt-[4px] h-[102px]" />
      <EditingGroup />
      <VLine className="mt-[4px] h-[102px]" />
      <div className="ml-auto mr-[11px] mt-[97px]"><ChevronUp /></div>
    </div>
  );
}

function InfoBar() {
  return (
    <div className="flex h-[36px] shrink-0 items-center border-y border-[#d9d6a0] bg-[#fdf5b6] text-[15px] text-[#444]">
      <Svg w={22} h={22} className="ml-[12px]"><circle cx="11" cy="11" r="11" fill="#3f74b8" /><path d="M8.500 9h3v8M8 17h7" stroke="#fff" strokeWidth="2" /><path d="M9.500 4h3v3h-3z" fill="#fff" /></Svg>
      <Fit className="ml-[12px] w-[186px] font-medium">MISSING PROOFING TOOLS</Fit>
      <Fit className="ml-[10px] w-[409px]">This document contains text in Thai which isn't being proofed.</Fit>
      <div className="ml-[22px] flex h-[26px] w-[156px] items-center justify-center border border-[#aaa] bg-white"><Fit className="w-[122px]">Never Show Again</Fit></div>
      <div className="ml-auto mr-[12px]"><Cross c="#666" s={10} sw={2.5} /></div>
    </div>
  );
}

const inRange = (from: number, to: number) => Array.from({ length: to - from + 1 }, (_, k) => from + k);

function HorizontalRuler() {
  return (
    <div className="grid h-[16px] w-[1788px] overflow-hidden">
      <div className="col-start-1 row-start-1 flex">
        <div className="w-[167px] bg-[#c6c4c7]" />
        <div className="w-[1404px] bg-white" />
        <div className="grow bg-[#c6c4c7]" />
      </div>
      <div className="col-start-1 row-start-1 -ml-[8px] flex h-[16px] items-center text-[13px] leading-[14px] text-[#444]">
        {inRange(-6, 59).map((i) => (
          <div key={i} className="flex h-[16px] w-[27px] shrink-0 items-center justify-center">
            {i === 0 ? null : i > 0 && i % 8 === 0 ? <span>{i / 8}</span> : i % 4 === 0 ? <div className="mt-[2px] h-[7px] w-px bg-[#444]" /> : <div className="mt-[2px] h-[2px] w-px bg-[#555]" />}
          </div>
        ))}
      </div>
    </div>
  );
}

function VerticalRuler() {
  return (
    <div className="grid h-[630px] w-[17px] shrink-0 grid-cols-[17px] overflow-hidden">
      <div className="col-start-1 row-start-1 flex flex-col">
        <div className="h-[218px] bg-[#c6c4c7]" />
        <div className="grow bg-white" />
      </div>
      <div className="col-start-1 row-start-1 -mt-[12px] flex flex-col items-center pl-[3px] text-[13px] leading-[14px] text-[#444]">
        {inRange(-8, 15).map((i) => (
          <div key={i} className="flex h-[27px] w-[14px] shrink-0 items-center justify-center">
            {i === 0 ? null : i % 8 === 0 ? <span className="-rotate-90">1</span> : i % 4 === 0 ? <div className="h-px w-[7px] bg-[#444]" /> : <div className="h-px w-[2px] bg-[#444]" />}
          </div>
        ))}
      </div>
    </div>
  );
}

const THAI = "font-['Norasi','Noto_Serif_Thai',serif] font-light";
const LATIN = "font-['Carlito','Lato',sans-serif] text-[32px] [font-variant-ligatures:none]";

function Workspace() {
  return (
    <div className="relative flex grow flex-col bg-[#e6e6e8]">
      <div className="flex h-[68px] shrink-0">
        <div className="ml-px flex h-[26px] w-[27px] items-center justify-center border-[3px] border-[#dbdadc] bg-white">
          <Svg w={9} h={9} className="mt-[4px]"><path d="M1 0v8h8" stroke="#666" strokeWidth="2.200" /></Svg>
        </div>
        <div className="ml-px mt-[5px]"><HorizontalRuler /></div>
      </div>
      <div className="flex h-[630px] shrink-0">
        <div className="ml-[5px]"><VerticalRuler /></div>
        <div className="ml-[8px] mt-px w-[1787px] border-r border-t border-[#cac9cb] bg-white pl-[167px] pt-[199px] text-[30px] leading-[87px] text-black">
          <div className="flex h-[86px] items-baseline">
            <Fit className={`w-[226px] ${THAI}`}>แบบฝึกหัดท้ายบทที่</Fit>
            <Fit className={`ml-[9px] w-[16px] ${LATIN}`}>3</Fit>
            <Fit className={`ml-[8px] w-[101px] ${THAI}`}>ส่งพฤหัส</Fit>
          </div>
          <div className="flex h-[87px] items-baseline">
            <Fit className={`w-[205px] ${THAI}`}>กิจกรรมกลุ่มครั้งที่</Fit>
            <Fit className={`ml-[9px] w-[169px] ${LATIN}`}>2 (Activity 2)</Fit>
            <Fit className={`ml-[7px] w-[128px] ${THAI}`}>ส่งวันจันทร์</Fit>
          </div>
          <div className="flex h-[86px] items-baseline">
            <Fit className={`w-[170px] ${THAI}`}>การบ้านค้างส่ง</Fit>
            <Fit className={`ml-[8px] w-[42px] ${LATIN}`}>4.2</Fit>
            <Fit className={`ml-[7px] w-[202px] ${THAI}`}>ทั้งหมดส่งวันเสาร์</Fit>
          </div>
        </div>
      </div>
      <div className="absolute left-[191px] top-[2px]">
        <Svg w={11} h={28}><path d="M.5.500h10v4L5.500 9l-5-4.500zM5.500 13l5 4.500v4h-10v-4zM.5 21.500h10v5H.500z" fill="#fff" stroke="#888" /></Svg>
      </div>
      <div className="absolute left-[1595px] top-[14px]">
        <Svg w={11} h={10}><path d="M5.500.700l5 4.500v4h-10v-4z" fill="#fff" stroke="#888" /></Svg>
      </div>
    </div>
  );
}

function Word() {
  return (
    <div className="absolute left-0 top-0 flex h-[969px] w-[1885px] flex-col border-x border-b border-[#2b579a] shadow-[2px_2px_7px_rgba(0,0,0,0.55)]">
      <TitleArea />
      <Ribbon />
      <InfoBar />
      <Workspace />
      <WordStatus page="Page 1 of 1" words="25 words" wordsWidth="w-[55px]" lang={<Fit className="w-[24px]">Thai</Fit>} />
    </div>
  );
}

/* ---------- taskbar ---------- */

function Task({ className = "", stacked, children }: P & { stacked?: boolean }) {
  return (
    <div className={`flex h-full shrink-0 ${className}`}>
      <div className="flex h-full grow items-center justify-center border border-[#e3c48c]/70 bg-white/15">{children}</div>
      {stacked && <div className="ml-px w-[3px] border border-l-0 border-[#e3c48c]/70" />}
      {stacked && <div className="ml-px w-[3px] border border-l-0 border-[#e3c48c]/70" />}
    </div>
  );
}

const Opera = ({ s }: { s: number }) => (
  <svg width={s} height={s} viewBox="0 0 38 38" className="block shrink-0">
    <defs><linearGradient id={`op${s}`} x1="0" y1="0" x2="1" y2="1"><stop offset="0" stopColor="#ff1b2d" /><stop offset=".5" stopColor="#c8101f" /><stop offset="1" stopColor="#ff5555" /></linearGradient></defs>
    <path fillRule="evenodd" d="M19 0a19 19 0 1 0 0 38 19 19 0 0 0 0-38zm0 5c5 0 8.500 6 8.500 14S24 33 19 33s-8.500-6-8.500-14S14 5 19 5z" fill={`url(#op${s})`} />
  </svg>
);

function Ie() {
  return (
    <Svg w={40} h={38}>
      <defs><linearGradient id="ie" x1="0" y1="0" x2="0" y2="1"><stop offset="0" stopColor="#8fe0fa" /><stop offset="1" stopColor="#2ea3dd" /></linearGradient></defs>
      <path d="M20 4a16 16 0 1 0 15 22h-9a7.500 7.500 0 0 1-13-3.500h23Q37 4 20 4zm-7 12.500q1-6 7-6t7 6z" fill="url(#ie)" stroke="#1f86c4" />
      <path d="M6 35Q0 30 10 18T31 2.500q6-1 5.500 4" stroke="#f5d33c" strokeWidth="3" />
    </Svg>
  );
}
function Folder() {
  return (
    <Svg w={42} h={38}>
      <defs>
        <linearGradient id="fo" x1="0" y1="0" x2="0" y2="1"><stop offset="0" stopColor="#f3e58e" /><stop offset="1" stopColor="#f0d78a" /></linearGradient>
        <linearGradient id="fb" x1="0" y1="0" x2="0" y2="1"><stop offset="0" stopColor="#a9d2ee" /><stop offset="1" stopColor="#5aa6df" /></linearGradient>
      </defs>
      <path d="M3 3q0-2 2-2h9l4 3h9l3 2h9v6H3z" fill="#efe3a3" stroke="#c9ad59" strokeWidth=".8" />
      <path d="M7 1h3v4H7z" fill="#3b9a4a" /><path d="M10 1h4v4h-4zM20 4h4v4h-4zM30 6h5v4h-5z" fill="#fff" /><path d="M16 4h4v4h-4z" fill="#d65a35" /><path d="M27 6h3v4h-3z" fill="#3b80c0" />
      <path d="M2 8h36v23q0 2-2 2H4q-2 0-2-2z" fill="url(#fo)" stroke="#d8bd5b" strokeWidth=".8" />
      <path d="M6 37V26q0-3 3-3h24q3 0 3 3v11h-8v-7H14v7z" fill="url(#fb)" stroke="#5b9fd2" strokeWidth=".8" />
      <path d="M12 18v17l4-4 3 7 3-1-3-7h6z" fill="#fff" stroke="#222" />
    </Svg>
  );
}
function Store() {
  return (
    <Svg w={38} h={38}>
      <path d="M0 0h38v38H0z" fill="#068a06" /><path d="M5 16l27-4-2 22-23-3z" fill="#fff" />
      <path d="M10 14q0-9 6-9t6 8M16 13q0-6 4-6t5 5" stroke="#fff" strokeWidth="1.800" />
      <path d="M10 19l5-.7v4.700h-5zM16 18l6-.8V23h-6zM10 24h5v4.500l-5-.7zM16 24h6v5.500l-6-.8z" fill="#068a06" />
    </Svg>
  );
}
function Calculator() {
  return (
    <Svg w={28} h={38}>
      <rect x="1" y="1" width="26" height="36" rx="2" fill="#b9dcec" stroke="#6c9db8" /><path d="M3 4h22v2H3z" fill="#e8a090" /><path d="M3 6h22v10H3z" fill="#f2faff" />
      <path d="M19.500 8.500h4v6h-4z" stroke="#3a5f80" />
      {inRange(0, 3).map((r) => inRange(0, 4).map((c) => <rect key={`${r}-${c}`} x={3 + c * 4.6} y={19 + r * 4.4} width="3.400" height="3" fill={c === 4 && r > 1 ? "#e6a23c" : "#4c86b0"} />))}
    </Svg>
  );
}
function Firefox() {
  return (
    <Svg w={38} h={38}>
      <defs><linearGradient id="ff" x1=".8" y1="0" x2=".3" y2="1"><stop offset="0" stopColor="#ffe14a" /><stop offset=".5" stopColor="#ff8a16" /><stop offset="1" stopColor="#f5156c" /></linearGradient></defs>
      <path d="M27 0q1 5 5 9 5 5 5 12A18 17 0 0 1 1 21Q1 12 5 7l2 4 4-4 1 5q4-1 8 0 0-7 7-12z" fill="url(#ff)" />
      <circle cx="20" cy="21" r="8.500" fill="#7542e5" /><path d="M10 14q6-2 10 2-6 1-6 6-5-2-4-8z" fill="#ff980e" />
    </Svg>
  );
}
function Paint() {
  return (
    <Svg w={40} h={38}>
      <path d="M2 22Q6 8 22 7t16 11q0 10-10 14-6 2-9-2-3 2-4 5-11-1-9-9-4 0-4-4z" fill="#cfe6f5" stroke="#88aecb" />
      <circle cx="7" cy="20" r="3.300" fill="#d6473c" /><circle cx="14" cy="14" r="3.300" fill="#4ca64c" /><circle cx="22" cy="11" r="3.600" fill="#e8a92c" /><circle cx="18" cy="22" r="2.700" fill="#b59a6b" />
      <path d="M22 37l11-28 3 1-12 27z" fill="#b97a4a" /><path d="M31 8l3-7 7 1-4 8z" fill="#d9b48c" />
    </Svg>
  );
}
function Office({ kind }: { kind: "impress" | "writer" }) {
  const c = kind === "impress" ? "#b5541c" : "#2f7f9a";
  return (
    <Svg w={34} h={40}>
      <path d="M1.500 1.500h20l11 11v26h-31z" fill="#fff" stroke={c} strokeWidth="3" /><path d="M24 0h10v10z" fill={kind === "impress" ? "#b5541c" : "#1a76c8"} />
      {kind === "impress" ? (
        <g stroke="#a9431a"><path d="M7 17h20v15H7z" strokeWidth="2" /><path d="M11 21h2M11 24.500h2M11 28h2M15 21h9M15 24.500h9M15 28h9" strokeWidth="1.800" /></g>
      ) : (
        <g stroke="#1a7a9c" strokeWidth="1.800"><path d="M7 16h7M7 19.500h7M7 23h7M7 27h20M7 30h20M7 33.500h14" /><path d="M16 16h10v7H16zM17 22l3-3 2 2 3-3" /></g>
      )}
    </Svg>
  );
}
function Edge() {
  return (
    <Svg w={40} h={40}>
      <defs>
        <linearGradient id="e1" x1="0" y1="0" x2="1" y2=".4"><stop offset="0" stopColor="#1e9be0" /><stop offset=".5" stopColor="#35c1d8" /><stop offset="1" stopColor="#62dd52" /></linearGradient>
        <linearGradient id="e2" x1="0" y1="0" x2="0" y2="1"><stop offset="0" stopColor="#1b96e0" /><stop offset="1" stopColor="#0a61b8" /></linearGradient>
      </defs>
      <path d="M0 20A20 20 0 0 1 40 19q0 8-9 8-8 0-6-4Q26 13 15 12 4 11 0 20z" fill="url(#e1)" />
      <path d="M0 20q3-9 12-9 10 0 13 7-3-2-7 0-5 4-3 11 3 7 10 10A20 20 0 0 1 0 20z" fill="url(#e2)" />
      <path d="M12 22q-1 15 14 17 6-1 11-7-3 1-8 1-11-1-11-13-5 0-6 2z" fill="#0d4f9e" />
    </Svg>
  );
}
function AppLetter({ letter, color }: { letter: string; color: string }) {
  return (
    <div className="grid h-[36px] w-[37px]">
      <Svg w={37} h={36} className="col-start-1 row-start-1">
        <path d="M18 5h17.500v26H18z" fill="#fff" stroke={color} strokeWidth="2" />
        {letter === "P" ? <g stroke={color}><path d="M26 9v6h6a6 6 0 1 1-6-6" strokeWidth="2" /><path d="M23 24h9M23 28h9" strokeWidth="2" /></g> : <path d="M23 10h9M23 13.500h9M23 17h9M23 20.500h9M23 24h9M23 27.500h9" stroke={color} strokeWidth="1.600" />}
        <path d="M0 4l21-4v36L0 32z" fill={color} />
      </Svg>
      <span className="col-start-1 row-start-1 flex w-[21px] items-center justify-center font-['Open_Sans',sans-serif] text-[17px] font-bold leading-none text-white">{letter}</span>
    </div>
  );
}
function Matlab() {
  return (
    <Svg w={40} h={38}>
      <defs><linearGradient id="ml" x1="0" y1="0" x2="1" y2="0"><stop offset="0" stopColor="#8a1f10" /><stop offset=".45" stopColor="#ef7a1f" /><stop offset=".55" stopColor="#f8b83a" /><stop offset="1" stopColor="#a5260f" /></linearGradient></defs>
      <path d="M0 21l10-5 8-6q4-5 7-9l-6 20-8 7z" fill="#3e86b8" /><path d="M26 1q7 8 13 31-7-6-12-3-4 3-9 8-1-7-7-10Q21 19 26 1z" fill="url(#ml)" />
    </Svg>
  );
}
function Chrome() {
  return (
    <Svg w={38} h={38}>
      <circle cx="19" cy="19" r="18" fill="#1da05a" /><path d="M3.400 10A18 18 0 0 1 34.600 10L19 11q-7 1-8 10z" fill="#dd4b3e" /><path d="M35 10.500A18 18 0 0 1 18.500 37L26 23q3-6-4-12.300z" fill="#ffcd40" />
      <circle cx="19" cy="19" r="8.500" fill="#fff" /><circle cx="19" cy="19" r="6.800" fill="#4b87f3" />
    </Svg>
  );
}
function Notepad() {
  return (
    <Svg w={38} h={38}>
      <defs><linearGradient id="np" x1="0" y1="0" x2="0" y2="1"><stop offset="0" stopColor="#b8dedf" /><stop offset="1" stopColor="#4f9ea8" /></linearGradient></defs>
      <path d="M33 4l4 29-5 4-2-1z" fill="#70614a" /><path d="M15 4h19l1 31-8 1z" fill="#f0f3f3" stroke="#a8b2b2" /><path d="M14 3l20 1-9 31-24-6z" fill="url(#np)" /><path d="M14 3h20" stroke="#555" strokeWidth="3" strokeDasharray="1.500 1.500" />
    </Svg>
  );
}
const ZoomApp = ({ s }: { s: number }) => (
  <svg width={s} height={s} viewBox="0 0 36 36" className="block shrink-0"><rect width="36" height="36" rx="9" fill="#4087fc" /><path d="M6 12h13q4 0 4 4v9H11q-5 0-5-5zM24 16l6-4.500v13L24 21z" fill="#fff" /></svg>
);

function Taskbar() {
  return (
    <div className="flex h-[48px] shrink-0 items-stretch bg-[linear-gradient(100deg,#b6882b_0px,#b5812b_300px,#b8832c_700px,#b2762b_880px,#ac762c_930px,#a07e40_1010px,#a48246_1055px,#bf9f6a_1058px,#c0a272_1300px,#bea16c_1500px,#bd9f62_1674px,#c09330_1678px,#c49c40_1730px,#b9922f_1920px)] text-white shadow-[inset_0_1px_0_#a87d1c]">
      <Cell className="w-[60px]">
        <Svg w={33} h={34}><path d="M0 5l14-2v13H0zM15.500 3L33 .500V16H15.500zM0 17.500h14V31L0 29zM15.500 17.500H33v16L15.500 31z" fill="#fff" /></Svg>
      </Cell>
      <Task className="ml-[2px] w-[71px]" stacked><Ie /></Task>
      <div className="ml-[2px] flex w-[70px]">
        <div className="flex w-[62px] items-center justify-center border border-[#fff1c8] bg-[linear-gradient(180deg,#dcb878,#f0e2b4)]"><Folder /></div>
        <div className="ml-px w-[3px] border border-l-0 border-[#f2dca8] bg-[#d9ba78]" />
        <div className="ml-px w-[3px] border border-l-0 border-[#f2dca8] bg-[#d9ba78]" />
      </div>
      <Cell className="ml-[18px] w-[38px]"><Store /></Cell>
      <Task className="ml-[19px] w-[70px]"><Calculator /></Task>
      <Cell className="ml-[18px] w-[38px]"><Firefox /></Cell>
      <Task className="ml-[19px] w-[70px]" stacked><Paint /></Task>
      <Cell className="ml-[22px] w-[34px]"><Office kind="impress" /></Cell>
      <Cell className="ml-[39px] w-[34px]"><Office kind="writer" /></Cell>
      <Cell className="ml-[36px] w-[40px]"><Edge /></Cell>
      <Task className="ml-[19px] w-[69px]" stacked><AppLetter letter="P" color="#d24726" /></Task>
      <Cell className="ml-[18px] w-[40px]"><Opera s={38} /></Cell>
      <Cell className="ml-[33px] w-[40px]"><Matlab /></Cell>
      <div className="ml-[17px] flex w-[71px] border-x border-[#5f4c2a]">
        <div className="flex w-[64px] items-center justify-center border border-[#fff6dd] bg-[#cbb487]"><AppLetter letter="W" color="#2b579a" /></div>
        <div className="ml-px w-[4px] border border-[#fff6dd]" />
      </div>
      <Cell className="ml-[18px] w-[38px]"><Chrome /></Cell>
      <Task className="ml-[19px] w-[71px]"><Notepad /></Task>
      <Task className="ml-[2px] w-[71px]"><ZoomApp s={36} /></Task>

      <div className="ml-auto flex items-center">
        <Svg w={39} h={24}><rect x=".7" y=".7" width="37.600" height="22.600" rx="2" fill="#fff" stroke="#5f5238" strokeWidth="1.400" /><path d="M4.500 4.500h30v14h-30zM4.500 9h30M4.500 13.500h30M10 4.500V14M15 4.500V14M20 4.500V14M25 4.500V14M30 4.500V14M11.500 14v4.500M28 14v4.500" stroke="#5f5238" /></Svg>
        <Svg w={20} h={20} className="ml-[14px]"><path d="M0 0h20v20H0z" fill="#e2081c" /><path d="M5 8q2-5 7-4.500 5 1.500 5 8.500-2-2-4-1-2-2.500-4.500-2Q7 7.500 5 8zM9.500 9l-2.500 6q-1 1.500-3 1M12 11q0 4 3 5" stroke="#fff" strokeWidth="1.300" /><circle cx="3" cy="17.500" r="2.800" fill="#ffe71a" /></Svg>
        <div className="ml-[10px]"><Opera s={19} /></div>
        <div className="ml-[12px]"><ZoomApp s={18} /></div>
        <Svg w={20} h={20} className="ml-[12px]"><path d="M2 1v18" stroke="#5f5238" strokeWidth="3.500" /><path d="M2 2v16" stroke="#fff" strokeWidth="2" /><path d="M4 2q4-1 7 2 3 2 7 1v7q-5 1-7-2-3-1-7 0z" fill="#fff" stroke="#5f5238" /></Svg>
        <Svg w={20} h={20} className="ml-[9px]"><path d="M1 14V1h16" stroke="#111" strokeWidth="1.500" /><path d="M2 2h16v12H2z" fill="#858585" /><path d="M3 17.500h5M11 17.500h5" stroke="#3a3428" strokeWidth="3" /></Svg>
        <Svg w={19} h={20} className="ml-[11px]"><path d="M1 7h4l6-6v18l-6-6H1z" fill="#c5523f" stroke="#7a2a1c" /><path d="M13 6q3 4 0 8M15.500 3.500q5 6.500 0 13" stroke="#f1dcb8" strokeWidth="1.500" /></Svg>
        <Svg w={19} h={21} className="ml-[12px]"><path d="M8.500 2.500h9v17h-9z" stroke="#fff" strokeWidth="2.500" /><path d="M11 0h4v2h-4z" fill="#fff" /><path d="M1.500 2v5M5.500 2v5M0 7h7v3H0zM3.500 10v9" stroke="#fff" strokeWidth="1.800" /></Svg>
        <Svg w={19} h={20} className="ml-[10px]"><path d="M1 7h3l5-6v18l-5-6H1z" fill="#fff" stroke="#5f5238" /><path d="M12 6q3 4 0 8M15 3.500q5 6.500 0 13" stroke="#fff" strokeWidth="1.600" /></Svg>
        <Svg w={16} h={17} className="ml-[12px]"><path d="M1.500 17v-3M5 17v-6M8.500 17V8M12 17V4M15 17V0" stroke="#fff" strokeWidth="2.200" /></Svg>
        <Fit className="ml-[22px] w-[24px] text-[14px]">ไทย</Fit>
        <div className="ml-[19px] mr-[18px] flex w-[68px] flex-col items-center text-[15px] leading-[22px]">
          <Fit className="w-[51px]">3:57 PM</Fit>
          <Fit className="w-[67px]">9/24/2021</Fit>
        </div>
      </div>
    </div>
  );
}

export default function App() {
  return (
    <div className="flex h-[1080px] w-[1920px] flex-col overflow-hidden bg-[#e6e6e8] font-['Open_Sans',sans-serif]">
      <div className="relative h-[1032px] shrink-0 overflow-hidden">
        <PowerPoint />
        <BackWord />
        <Word />
      </div>
      <Taskbar />
    </div>
  );
}
